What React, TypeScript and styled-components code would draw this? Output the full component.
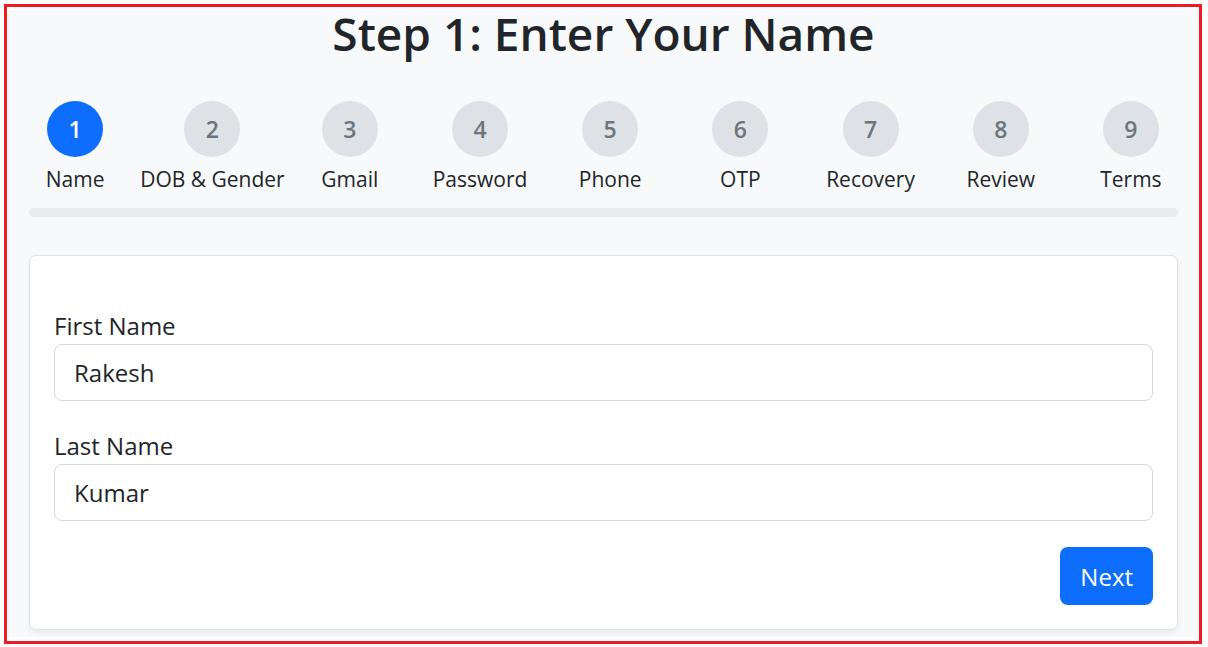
import styled, { createGlobalStyle } from "styled-components";

const steps = [
    "Name",
    "DOB & Gender",
    "Gmail",
    "Password",
    "Phone",
    "OTP",
    "Recovery",
    "Review",
    "Terms",
];

const GlobalStyle = createGlobalStyle`
    html, body {
        margin: 0;
        padding: 0;
        background: #ffffff;
    }
    body {
        font-family: "Open Sans", "Noto Sans", sans-serif;
        color: #212529;
    }
    * {
        box-sizing: border-box;
    }
`;

export default function App() {
    const current = 1;
    return (
        <>
            <GlobalStyle />
            <Frame>
                <Page>
                    <Container>
                        <Title>Step 1: Enter Your Name</Title>
                        <Stepper>
                            {steps.map((label, i) => (
                                <Step key={label}>
                                    <Circle $active={i + 1 === current}>{i + 1}</Circle>
                                    <StepLabel>{label}</StepLabel>
                                </Step>
                            ))}
                        </Stepper>
                        <Progress>
                            <ProgressFill style={{ width: "0%" }} />
                        </Progress>
                        <Card>
                            <Field>
                                <Label htmlFor="first">First Name</Label>
                                <Input id="first" defaultValue="Rakesh" />
                            </Field>
                            <Field>
                                <Label htmlFor="last">Last Name</Label>
                                <Input id="last" defaultValue="Kumar" />
                            </Field>
                            <Actions>
                                <NextButton type="button">Next</NextButton>
                            </Actions>
                        </Card>
                    </Container>
                </Page>
            </Frame>
        </>
    );
}

const Frame = styled.div`
    margin: 4px 6px 3px 4px;
    height: 640px;
    border: 3px solid #ed1c24;
    padding: 6px 1px 1px 1px;
    background: #ffffff;
`;

const Page = styled.div`
    height: 100%;
    background: #f8f9fa;
`;

const Container = styled.div`
    padding: 0 20px 0 21px;
`;

const Title = styled.h2`
    margin: -3px 0 0 0;
    text-align: center;
    font-size: 46px;
    line-height: 46px;
    font-weight: 600;
    color: #212529;
`;

const Stepper = styled.div`
    display: flex;
    margin: 45px -18px 0 -19px;
`;

const Step = styled.div`
    flex: 1 1 0;
    display: flex;
    flex-direction: column;
    align-items: center;
    white-space: nowrap;
`;

const Circle = styled.div<{ $active: boolean }>`
    width: 56px;
    height: 56px;
    border-radius: 50%;
    display: flex;
    align-items: center;
    justify-content: center;
    font-size: 23px;
    font-weight: 600;
    background: ${(p) => (p.$active ? "#0d6efd" : "#dee2e6")};
    color: ${(p) => (p.$active ? "#ffffff" : "#6c757d")};
`;

const StepLabel = styled.span`
    margin-top: 7px;
    font-size: 21px;
    line-height: 31px;
    color: #212529;
`;

const Progress = styled.div`
    margin-top: 13px;
    height: 9px;
    border-radius: 5px;
    background: #e9ecef;
    overflow: hidden;
`;

const ProgressFill = styled.div`
    height: 100%;
    background: #0d6efd;
`;

const Card = styled.div`
    margin-top: 38px;
    background: #ffffff;
    border: 1px solid #dfe2e6;
    border-radius: 7px;
    box-shadow: 0 3px 6px rgba(0, 0, 0, 0.06);
    padding: 52px 24px 24px 24px;
`;

const Field = styled.div`
    display: flex;
    flex-direction: column;
    margin-bottom: 27px;
`;

const Label = styled.label`
    font-size: 24px;
    line-height: 36px;
    color: #212529;
`;

const Input = styled.input`
    height: 57px;
    border: 1px solid #d4d9de;
    border-radius: 8px;
    padding: 0 19px;
    font-family: inherit;
    font-size: 24px;
    color: #212529;
    background: #ffffff;
    outline: none;
`;

const Actions = styled.div`
    display: flex;
    justify-content: flex-end;
    margin-top: -1px;
`;

const NextButton = styled.button`
    height: 58px;
    padding: 0 20px;
    border: none;
    border-radius: 8px;
    background: #0d6efd;
    color: #ffffff;
    font-family: inherit;
    font-size: 24px;
    cursor: pointer;
`;
